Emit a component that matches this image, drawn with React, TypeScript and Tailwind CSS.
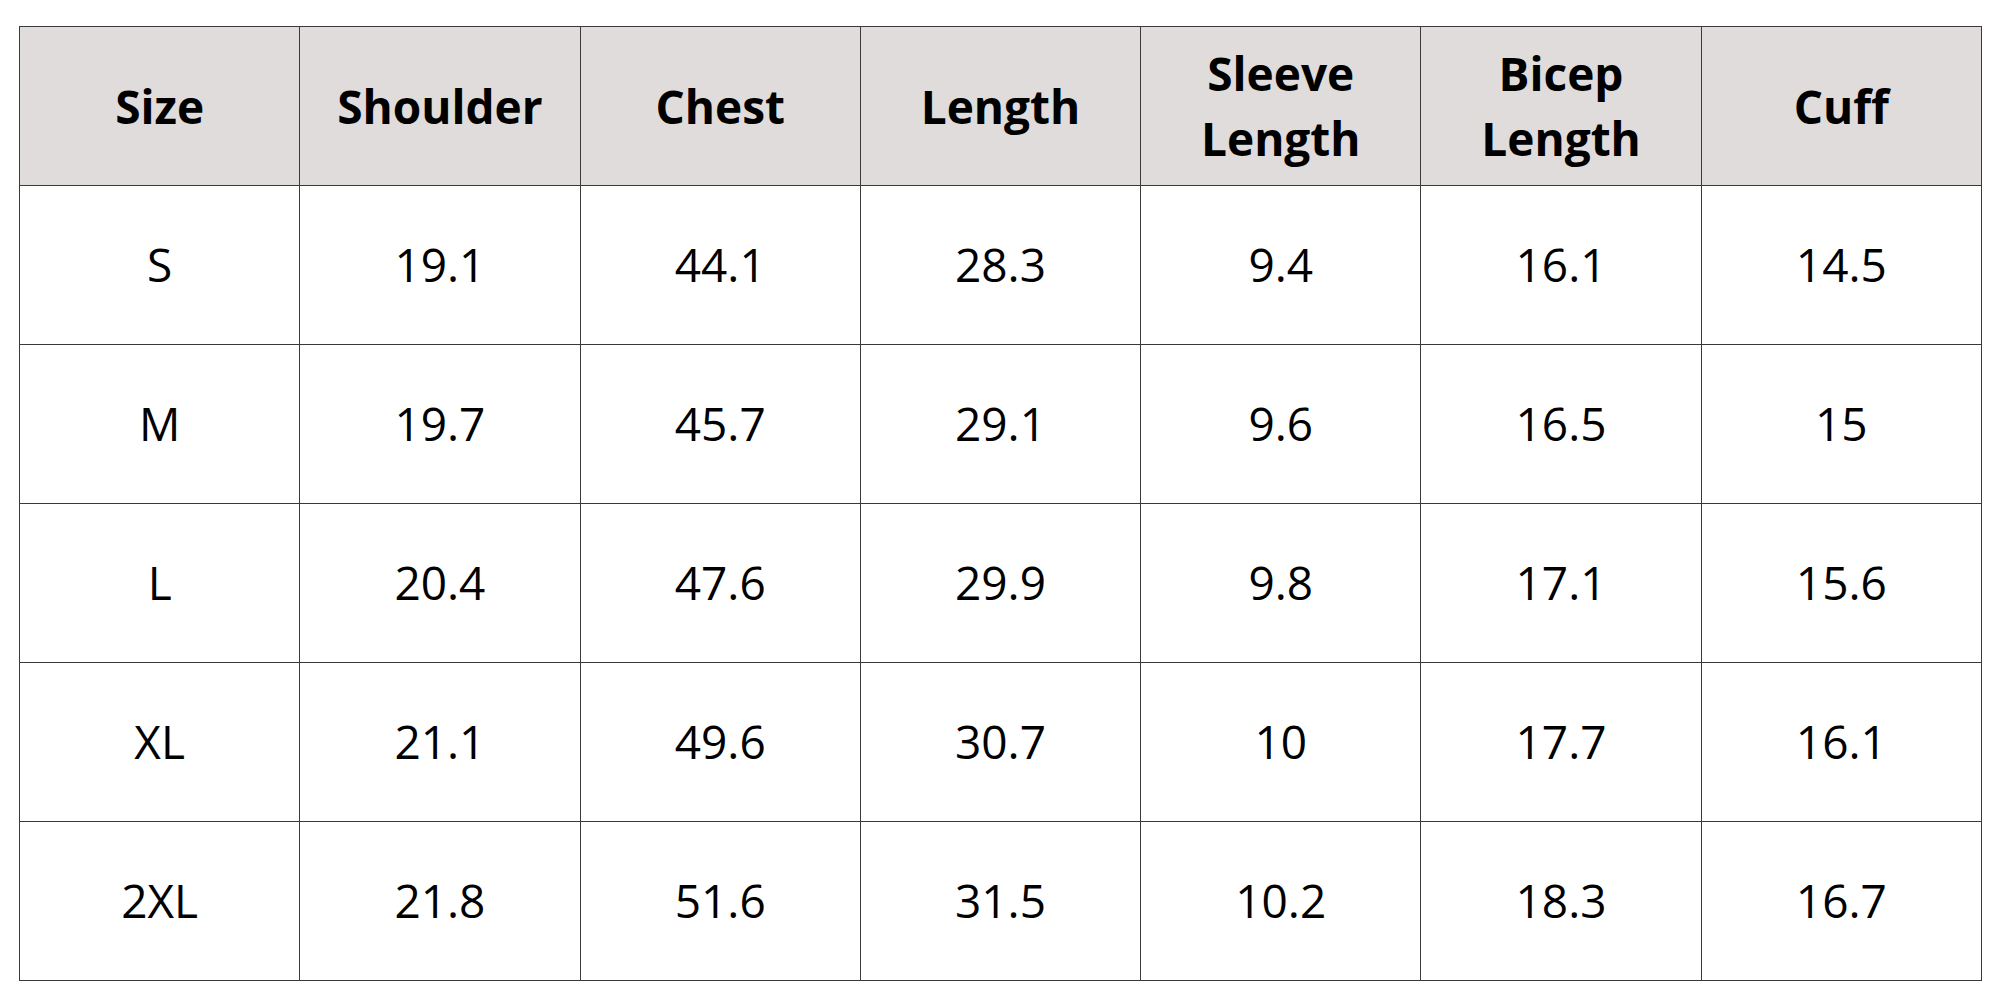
import React from "react";

const headers = ["Size", "Shoulder", "Chest", "Length", "Sleeve\nLength", "Bicep\nLength", "Cuff"];
const rows = [
  ["S", "19.1", "44.1", "28.3", "9.4", "16.1", "14.5"],
  ["M", "19.7", "45.7", "29.1", "9.6", "16.5", "15"],
  ["L", "20.4", "47.6", "29.9", "9.8", "17.1", "15.6"],
  ["XL", "21.1", "49.6", "30.7", "10", "17.7", "16.1"],
  ["2XL", "21.8", "51.6", "31.5", "10.2", "18.3", "16.7"],
];

export default function App() {
  return (
    <div className="w-[2000px] h-[1000px] bg-white pt-[26px] pl-[19px]" style={{ fontFamily: '"Open Sans", sans-serif' }}>
      <table className="table-fixed border-collapse w-[1963px] text-black">
        <thead>
          <tr className="h-[159px] bg-[#dfdcdb]">
            {headers.map((h) => (
              <th key={h} className="border border-[#3a3a3a] text-[46px] font-bold leading-[65px] whitespace-pre-line text-center align-middle">
                {h}
              </th>
            ))}
          </tr>
        </thead>
        <tbody>
          {rows.map((r) => (
            <tr key={r[0]} className="h-[159px]">
              {r.map((c, i) => (
                <td key={i} className="border border-[#3a3a3a] text-[46px] font-normal leading-[60px] pb-[2px] text-center align-middle">
                  {c}
                </td>
              ))}
            </tr>
          ))}
        </tbody>
      </table>
    </div>
  );
}
